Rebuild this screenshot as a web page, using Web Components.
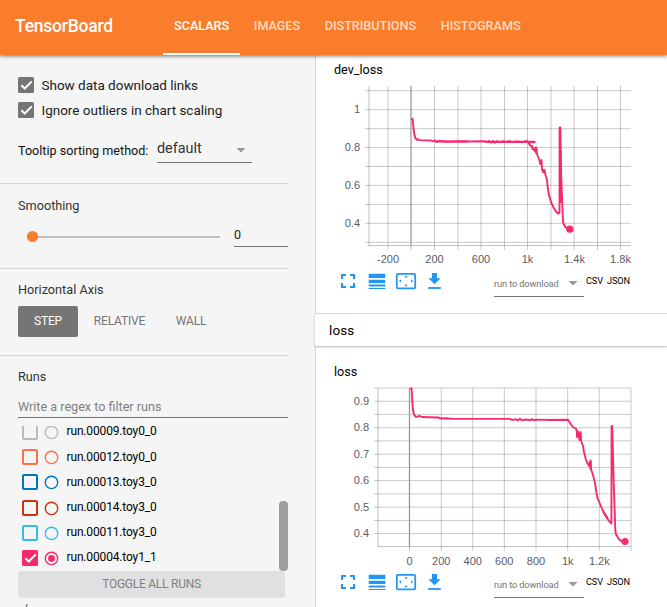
<!DOCTYPE html>
<html lang="en">
<head>
<meta charset="utf-8">
<title>TensorBoard</title>
<style>
html,body{margin:0;height:607px;overflow:hidden;background:#fff;font-family:Roboto,"Liberation Sans",sans-serif;font-size:13px;color:#212121}
</style>
</head>
<body>
<tb-app></tb-app>
<script>
const define = (name, render) => customElements.define(name, class extends HTMLElement {
  connectedCallback() {
    if (this.shadowRoot) return;
    this.attachShadow({mode: 'open'}).innerHTML = render(this);
  }
});
const at = (el, n, d = '') => el.getAttribute(n) ?? d;

define('tb-tab', el => `<style>
:host{display:flex;height:55px;box-sizing:border-box;padding:0 11.1px 3px;align-items:center;font-size:12.6px;font-weight:500;color:rgba(255,255,255,.72);border-bottom:2px solid transparent;white-space:nowrap}
:host([active]){color:#fff;border-bottom-color:#fff}
</style><slot></slot>`);

define('tb-toolbar', () => `<style>
:host{display:flex;height:55px;flex:none;background:#fa7d2b;box-shadow:0 1px 4px rgba(0,0,0,.55);z-index:2;position:relative}
h1{margin:0;font-size:17.5px;font-weight:500;color:#fff;width:148px;padding-left:15px;line-height:52px;letter-spacing:-.22px}
nav{display:flex;gap:2.5px}
</style><h1>TensorBoard</h1><nav><slot></slot></nav>`);

define('tb-check', el => {
  const c = at(el, 'color', '#757575');
  return `<style>:host{display:block;width:16px;height:16px;flex:none}svg{display:block}</style>
  <svg width="16" height="16">${el.hasAttribute('checked')
    ? `<rect width="16" height="16" rx="1.5" fill="${c}"/><path d="M3.4 8.2 6.7 11.5 13.8 4.4" fill="none" stroke="#fff" stroke-width="2"/>`
    : `<rect x="1" y="1" width="14" height="14" rx="1" fill="none" stroke="${c}" stroke-width="2"/>`}</svg>`;
});

define('tb-option', () => `<style>
:host{display:flex;height:25px;align-items:center;gap:7.5px;font-size:13.5px;letter-spacing:-.01px}
</style><tb-check checked></tb-check><span><slot></slot></span>`);

define('tb-dropdown', () => `<style>
:host{display:flex;box-sizing:border-box;align-items:center;justify-content:space-between;border-bottom:1px solid #757575;white-space:nowrap}
svg{display:block;margin-right:6px;padding-top:var(--arrow-drop,3px)}
</style><slot></slot><svg width="10" height="5"><path d="M.5 0h9L5 4.6z" fill="#999"/></svg>`);

define('tb-group', () => `<style>
:host{display:block;box-sizing:border-box;width:288px;padding-left:18px;border-bottom:1px solid #d5d5d5}
</style><slot></slot>`);

define('tb-slider', () => `<style>
:host{display:flex;align-items:center;height:24px}
svg{display:block;width:216px;height:24px;flex:none}
.value{box-sizing:border-box;width:54px;height:24px;border-bottom:1px solid #757575;line-height:24px;font-size:12.5px}
</style><svg><path d="M14 14H202" stroke="#bdbdbd" stroke-width="2"/><circle cx="14.5" cy="13.5" r="5.6" fill="#fa7d2b"/></svg><div class="value">0</div>`);

define('tb-axis-button', () => `<style>
:host{display:flex;box-sizing:border-box;height:31px;align-items:center;justify-content:center;border-radius:2px;color:#757575;font-size:12px;letter-spacing:-.17px;padding-bottom:1px}
:host([active]){background:#757575;color:#fff}
</style><slot></slot>`);

define('tb-run', el => {
  const c = at(el, 'color');
  return `<style>
:host{display:flex;height:25.2px;align-items:center;font-size:12px;color:#000}
svg{display:block;margin:0 8px 0 5.5px}
span{padding-bottom:1.5px;line-height:10px;letter-spacing:-.15px}
</style><tb-check color="${c}" ${el.hasAttribute('checked') ? 'checked' : ''}></tb-check>
<svg width="15" height="16"><circle cx="7.5" cy="8.4" r="6.2" fill="none" stroke="${c}" stroke-width="1.4"/>${el.hasAttribute('checked') ? `<circle cx="7.5" cy="8.4" r="3.4" fill="${c}"/>` : ''}</svg><span><slot></slot></span>`;
});

define('tb-sidebar', () => `<style>
:host{display:block;width:315px;flex:none;background:#f5f5f5;overflow:hidden}
.g1{height:129px;padding-top:17.5px}
.g2{height:85px;padding-top:13px}
.g3{height:87px;padding-top:12px}
.g4{height:252px;padding-top:12px;border:0}
h3{margin:0;font-size:12.7px;font-weight:400;line-height:17px;color:#333}
.tip{display:flex;height:29px;margin-top:12.5px;color:#111}
.tip span{width:139px;line-height:32px;white-space:nowrap;font-size:12.6px}
.tip tb-dropdown{width:95px;height:28px;font-size:14.4px;line-height:27px;color:#333;box-sizing:border-box}
tb-slider{margin-top:8.5px}
.axis{display:flex;margin-top:8px}
.field{height:33px;box-sizing:border-box;border-bottom:1px solid #757575;color:#808080;line-height:43px;font-size:12.6px}
.list{height:145px;margin-top:8px;overflow:hidden;display:flex;justify-content:space-between}
.runs{margin:-6.5px 0 0 4px}
.bar{align-self:flex-end;height:70px;width:9px;border-radius:4px;background:#9e9e9e}
.toggle{height:27px;width:267px;background:#e0e0e0;border-radius:3px;text-align:center;line-height:26px;font-size:12px;letter-spacing:-.25px;color:#808080}
.path{font-size:12px;line-height:14px;padding:4px 0 0 5px;color:#444}
</style>
<tb-group class="g1"><tb-option>Show data download links</tb-option><tb-option>Ignore outliers in chart scaling</tb-option>
<div class="tip"><span>Tooltip sorting method:</span><tb-dropdown>default</tb-dropdown></div></tb-group>
<tb-group class="g2"><h3>Smoothing</h3><tb-slider></tb-slider></tb-group>
<tb-group class="g3"><h3>Horizontal Axis</h3><div class="axis"><tb-axis-button active style="width:60px">STEP</tb-axis-button><tb-axis-button style="width:83px">RELATIVE</tb-axis-button><tb-axis-button style="width:60px">WALL</tb-axis-button></div></tb-group>
<tb-group class="g4"><h3>Runs</h3><div class="field">Write a regex to filter runs</div>
<div class="list"><div class="runs">
<tb-run color="#bbbbbb">run.00009.toy0_0</tb-run><tb-run color="#ff7043">run.00012.toy0_0</tb-run><tb-run color="#0077bb">run.00013.toy3_0</tb-run><tb-run color="#cc3311">run.00014.toy3_0</tb-run><tb-run color="#33bbee">run.00011.toy3_0</tb-run><tb-run color="#f7286f" checked>run.00004.toy1_1</tb-run></div><div class="bar"></div></div>
<div class="toggle">TOGGLE ALL RUNS</div><div class="path">/</div></tb-group>`);

define('tb-chart-tools', () => `<style>
:host{display:flex;height:30px;align-items:flex-start}
svg{display:block;width:104px;height:24px;margin-left:24px;flex:none}
tb-dropdown{width:90px;height:27px;margin-left:50px;font-size:9.2px;color:#757575;letter-spacing:-.1px;padding-top:1px;--arrow-drop:0px}
.f{font-size:9.2px;color:#000;line-height:22px;margin-left:2px;letter-spacing:-.12px}
.f + .f{margin-left:4px}
</style><svg viewBox="340 270 104 24">
<g fill="none" stroke="#2196f3" stroke-width="2"><path d="M342 279v-4h4M350 275h4v4M354 283v4h-4M346 287h-4v-4"/>
<rect x="396.8" y="273.8" width="18.4" height="14.6" rx="1.2" stroke-width="1.8"/><path d="M428.2 288h12.6" stroke-width="1.8"/></g>
<g fill="#2196f3"><path d="M368.7 273.8h16.6v4.2h-16.6zM368.7 279.7h16.6v3.4h-16.6zM368.7 284.6h16.6v2h-16.6zM368.7 288h16.6v1h-16.6z"/>
<path d="M404.2 277.4 406 275.4 407.8 277.4zM404.2 284.8 406 286.8 407.8 284.8zM401 279.2 399 281 401 282.8zM411 279.2 413 281 411 282.8z"/>
<path d="M432 273h5v5.2h3.7l-6.2 6.1-6.2-6.1h3.7z"/></g></svg>
<tb-dropdown>run to download</tb-dropdown><span class="f">CSV</span><span class="f">JSON</span>`);

/* Each chart is drawn in dashboard coordinates; the view box selects its part. */
const charts = {
  dev_loss: {
    box: [316, 80, 351, 190], x: [365, 631], y: [86, 246], left: 369, zero: 411, tick: 250, ty: 263,
    v: [388, 434.5, 458, 481, 504.5, 527.5, 551, 574, 597.5, 620.5],
    h: [90.7, 109.7, 128.7, 147.6, 166.5, 185.4, 204.4, 223.3, 242.3],
    xl: [[388, '-200'], [434.5, '200'], [481, '600'], [527.5, '1k'], [574.5, '1.4k'], [620.5, '1.8k']],
    yl: [[109.7, '1'], [147.6, '0.8'], [185.4, '0.6'], [223.3, '0.4']], lx: 360,
    d: 'M411 119h1.6l.9 9 .8 6 1 4 1.7 1.8 L418 139.3l1.5.8 L431 140.5 433 141.4 435 140.4 437 142 439 141 448 141.7 459 141.2 468 141.5 484 141.3 487 142 489 141 491 142.6 493 141 495 142.8 497 141.2 500 142.5 503 141.2 506 142.2 509 141.2 513 142.2 517 141.4 522 142.2 527 141 528 142.2H535.5M528 141.5 530 145.5 532 146 532.5 149 534 149.5 534.5 151 536 147.3 537 154 539 159 540.5 164 541.5 160 542 169 543.5 172 544.5 170 545.5 175 547 180 548 190 549.5 197 551 202 553.5 207.5 556 211.5 558 213.5 559.5 213 559.6 127.5H560.4L561 170 562.3 205 563 222.5 565 226.5 567 228.5 569.8 229.2',
    thick: 'M533.3 147v3M536.3 147.5v6.5M540.7 160v5M543.3 169v4M560.7 150V203M435 141.5H468M486 141.9H535',
    dot: [569.8, 229.2]
  },
  loss: {
    box: [316, 381, 351, 190], x: [374, 631], y: [388, 547], left: 378, zero: 409.5, tick: 551, ty: 565,
    v: [441.3, 472.7, 504.3, 536, 567.7, 599.3, 631],
    h: [388, 401.2, 414.4, 427.7, 440.9, 454.2, 467.4, 480.6, 493.9, 507.1, 520.4, 533.6],
    xl: [[409.5, '0'], [441.3, '200'], [472.7, '400'], [504.3, '600'], [536, '800'], [567.7, '1k'], [599.3, '1.2k']],
    yl: [[401.2, '0.9'], [427.7, '0.8'], [454.2, '0.7'], [480.6, '0.6'], [507.1, '0.5'], [533.6, '0.4']], lx: 369,
    d: 'M410 388.5H411.6L412.3 402 413 410 414 414.5 415.8 416.8 418 416.5 420 416 422 417 438 417.5 441 418.5 446 418.2 453 418.9 510 418.9 512 420 516 419.3 518 420.4 520 418.8 522 420.4 526 419.5 530 420.3 532 419.2 534 420.3 536 419.6 550 420 568 419.8 571 424.5 573 427 576 428.8 577 432 577 437 578 431.5 579.5 440 580.5 432 581 440.5 583 446 584 452 586 460 589 466 590.5 460.5 591 469 593 475 595 483 596.5 493 597.5 498 600 504 603 511 606 516.5 609 521 611.4 523.5 611.6 426H612.2L613.8 485 615.3 530 616 534.5 619 539 621 541 625 541.5',
    thick: 'M577.3 432v5M580.5 432.5v7M590.6 461v9M603.5 512l4 6',
    dot: [625, 541.5]
  }
};
define('tb-line-chart', el => {
  const c = charts[at(el, 'series')], [y0, y1] = c.y, [x0, x1] = c.x;
  return `<style>:host{display:block}svg{display:block}text{font:11px "Liberation Sans",sans-serif;fill:#5b5b66}</style>
<svg width="${c.box[2]}" height="${c.box[3]}" viewBox="${c.box.join(' ')}">
<g fill="none" stroke="#000" stroke-opacity=".21">
${c.v.map(x => `<path d="M${x} ${y0}V${c.tick}"/>`).join('')}
${c.h.map(y => `<path d="M${x0} ${y}H${x1}"/>`).join('')}
<path d="M${c.left} ${y0}V${y1}M${c.left} ${y1 - .4}H${x1}M${c.zero} ${y1}V${c.tick}" stroke-opacity=".25"/></g>
<path d="M${c.zero} ${y0}V${y1}" stroke="#999" stroke-width="1.3"/>
<g fill="none" stroke="#f52b72" stroke-linejoin="round"><path d="${c.d}" stroke-width="1.9"/><path d="${c.thick}" stroke-width="2.2"/></g>
<circle cx="${c.dot[0]}" cy="${c.dot[1]}" r="3.6" fill="#f52b72"/>
<g text-anchor="middle">${c.xl.map(([x, t]) => `<text x="${x}" y="${c.ty}">${t}</text>`).join('')}</g>
<g text-anchor="end">${c.yl.map(([y, t]) => `<text x="${c.lx}" y="${y + 3.6}">${t}</text>`).join('')}</g>
</svg>`;
});

define('tb-chart-card', el => `<style>
:host{display:block;box-sizing:border-box}
h4{margin:0 0 var(--title-gap,2px);font-size:12.6px;font-weight:400;line-height:16px;color:#000;padding-left:18px}
</style><h4>${at(el, 'series')}</h4><tb-line-chart series="${at(el, 'series')}"></tb-line-chart><tb-chart-tools></tb-chart-tools>`);

define('tb-main', () => `<style>
:host{display:block;flex:1;box-sizing:border-box;border-left:1px solid #d9d9d9;overflow:visible}
.dev{height:259px;padding-top:7px;border-bottom:1px solid #ddd;box-sizing:border-box}
header{height:32px;margin-left:-1px;padding-left:14px;background:#fff;box-shadow:0 1px 2px rgba(0,0,0,.3);font-size:13.5px;line-height:33px;letter-spacing:.1px;color:#000;position:relative}
.loss{padding-top:18px;--title-gap:1px}
</style><tb-chart-card class="dev" series="dev_loss"></tb-chart-card><header>loss</header><tb-chart-card class="loss" series="loss"></tb-chart-card>`);

define('tb-app', () => `<style>
:host{display:flex;flex-direction:column;height:607px;width:667px;overflow:hidden}
.body{display:flex;height:552px}
</style><tb-toolbar><tb-tab active>SCALARS</tb-tab><tb-tab>IMAGES</tb-tab><tb-tab>DISTRIBUTIONS</tb-tab><tb-tab>HISTOGRAMS</tb-tab></tb-toolbar>
<div class="body"><tb-sidebar></tb-sidebar><tb-main></tb-main></div>`);
</script>
</body>
</html>
